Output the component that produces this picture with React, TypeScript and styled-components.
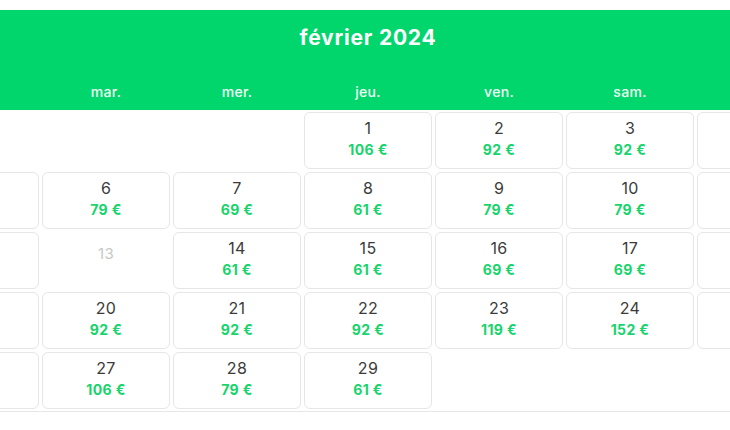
import React from "react";
import styled, { createGlobalStyle } from "styled-components";

const Global = createGlobalStyle`
  html, body { margin: 0; padding: 0; background: #ffffff; }
  body { font-family: Inter, "Open Sans", "Liberation Sans", sans-serif; }
`;

const Page = styled.div`
  width: 730px;
  height: 430px;
  padding-top: 10px;
  box-sizing: border-box;
  overflow: hidden;
`;

const Header = styled.header`
  height: 100px;
  background: #00d66c;
  display: flex;
  flex-direction: column;
  color: #ffffff;
`;

const Title = styled.h1`
  margin: 0;
  padding-top: 16px;
  font-size: 21px;
  line-height: 24px;
  font-weight: 700;
  letter-spacing: 0.8px;
  text-align: center;
  padding-left: 6px;
`;

const Columns = styled.div`
  display: grid;
  grid-template-columns: repeat(7, 128px);
  column-gap: 3px;
  margin-left: -89px;
  width: max-content;
`;

const WeekRow = styled(Columns)`
  margin-top: auto;
  padding-bottom: 10px;
`;

const WeekDay = styled.div`
  text-align: center;
  font-size: 14px;
  line-height: 16px;
  font-weight: 500;
  letter-spacing: 0.3px;
  color: #f2fff7;
`;

const Body = styled.div`
  border-bottom: 1px solid #e6e6e6;
  padding: 2px 0 2px;
`;

const DayGrid = styled(Columns)`
  row-gap: 3px;
  grid-auto-rows: 57px;
`;

const Cell = styled.div<{ $kind: "empty" | "day" | "off" }>`
  box-sizing: border-box;
  border-radius: 6px;
  border: 1px solid ${(p) => (p.$kind === "day" ? "#e6e6e6" : "transparent")};
  display: flex;
  flex-direction: column;
  align-items: center;
  padding-top: ${(p) => (p.$kind === "off" ? "11px" : "5px")};
`;

const DayNum = styled.span<{ $off?: boolean }>`
  font-size: ${(p) => (p.$off ? "15px" : "16px")};
  line-height: 20px;
  letter-spacing: 0.3px;
  color: ${(p) => (p.$off ? "#c8c8c8" : "#3b3b3b")};
`;

const Price = styled.span`
  margin-top: 3px;
  font-size: 14px;
  line-height: 18px;
  font-weight: 700;
  letter-spacing: 0.4px;
  color: #17d46c;
`;

type Day = { d: number; p?: number } | null;

const prices: Record<number, number> = {
  1: 106, 2: 92, 3: 92, 4: 92, 5: 79, 6: 79, 7: 69, 8: 61, 9: 79, 10: 79, 11: 79,
  12: 69, 14: 61, 15: 61, 16: 69, 17: 69, 18: 79, 19: 92, 20: 92, 21: 92, 22: 92,
  23: 119, 24: 152, 25: 119, 26: 106, 27: 106, 28: 79, 29: 61,
};

const days: Day[] = [
  null, null, null,
  ...Array.from({ length: 29 }, (_, i) => ({ d: i + 1, p: prices[i + 1] })),
];

const weekDays = ["lun.", "mar.", "mer.", "jeu.", "ven.", "sam.", "dim."];

export default function App() {
  return (
    <>
      <Global />
      <Page>
        <Header>
          <Title>février 2024</Title>
          <WeekRow>
            {weekDays.map((w) => (
              <WeekDay key={w}>{w}</WeekDay>
            ))}
          </WeekRow>
        </Header>
        <Body>
          <DayGrid>
            {days.map((day, i) => {
              if (!day) return <Cell key={"e" + i} $kind="empty" />;
              if (day.d === 13)
                return (
                  <Cell key={day.d} $kind="off">
                    <DayNum $off>{day.d}</DayNum>
                  </Cell>
                );
              return (
                <Cell key={day.d} $kind="day">
                  <DayNum>{day.d}</DayNum>
                  <Price>{day.p} €</Price>
                </Cell>
              );
            })}
          </DayGrid>
        </Body>
      </Page>
    </>
  );
}
